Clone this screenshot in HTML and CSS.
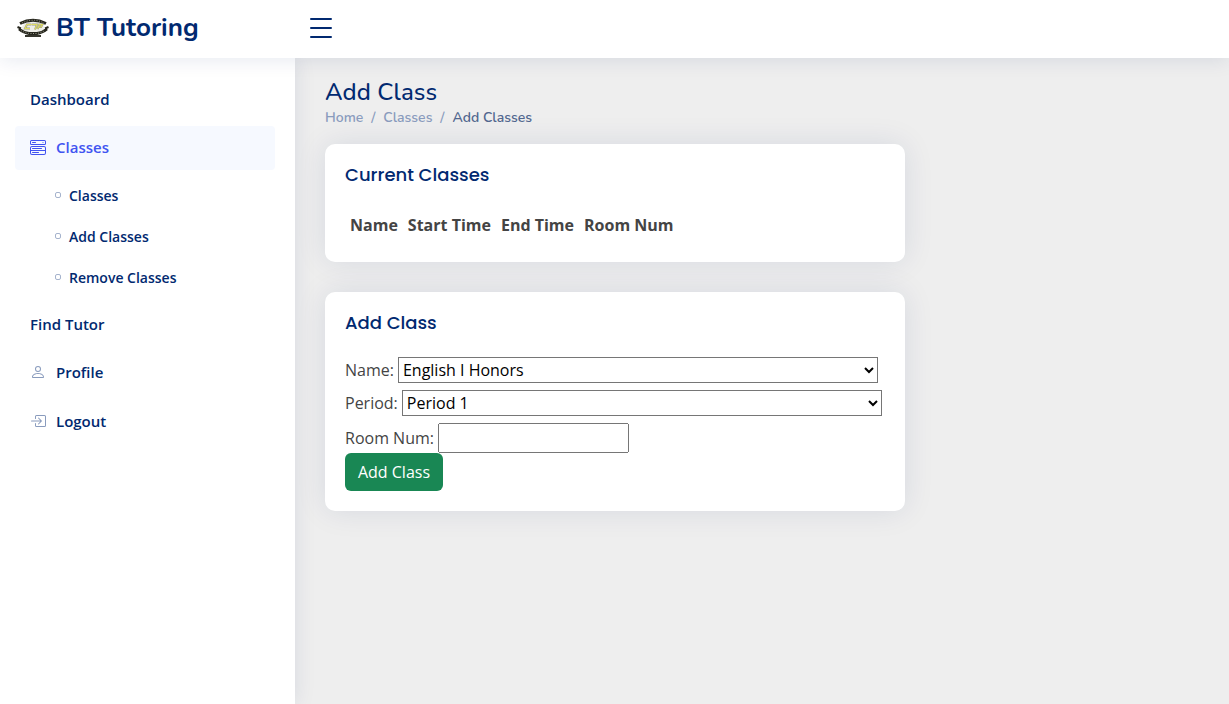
FILE: index.html
```html
<!DOCTYPE html>
<html lang="en">
<head>
<meta charset="utf-8">
<title>BT Tutoring - Add Class</title>
<link rel="stylesheet" href="styles.css">
</head>
<body>
<header class="header">
  <a class="logo">
    <svg class="logo-mark" viewBox="0 0 32 20" width="32" height="20">
      <ellipse cx="16" cy="9.500" rx="11" ry="6" fill="#eeeee8"/>
      <path d="M3 5.500Q16-1 29 5.500" fill="none" stroke="#25251c" stroke-width="2.800"/>
      <path d="M5 5Q16-.5 27 5" fill="none" stroke="#b8b8a8" stroke-width=".8" stroke-dasharray="1 1.500"/>
      <path d="M.5 9L4 10.500M31.500 9L28 10.500" stroke="#25251c" stroke-width="2"/>
      <path d="M2 11Q7 15 12 15.500H20Q25 15 30 11" fill="none" stroke="#25251c" stroke-width="2.800"/>
      <path d="M4 12.500Q8 15 13 15.500H19Q24 15 28 12.500" fill="none" stroke="#c0c0b0" stroke-width=".8" stroke-dasharray="1 1.500"/>
      <path d="M8 18H24" stroke="#35352c" stroke-width="2"/>
      <path d="M14 6.500H10L8 10.500H13M14.500 6.500H20L18 11.500M20.500 11L22.500 6.500H25.500L24 9H22" fill="none" stroke="#9a9a8a" stroke-width="2"/>
      <path d="M14 6.500H10L8 10.500H13M14.500 6.500H20L18 11.500M20.500 11L22.500 6.500H25.500L24 9H22" fill="none" stroke="#dfdc62" stroke-width="1.100"/>
    </svg>
    <span class="logo-text">BT Tutoring</span>
  </a>
  <svg class="menu-toggle" viewBox="0 0 32 32" width="32" height="32"><path d="M6 7H26M6 16H26M6 25H26" stroke="#012970" stroke-width="2" stroke-linecap="round"/></svg>
</header>
<div class="page">
  <aside class="sidebar">
    <a class="nav-link">Dashboard</a>
    <a class="nav-link active">
      <svg class="nav-icon" viewBox="0 0 16 16"><path d="M0 1.500A1.500 1.500 0 0 1 1.500 0h13A1.500 1.500 0 0 1 16 1.500v2A1.500 1.500 0 0 1 14.500 5h-13A1.500 1.500 0 0 1 0 3.500zM1.500 1a.5.5 0 0 0-.5.5v2a.5.5 0 0 0 .5.5h13a.5.5 0 0 0 .5-.5v-2a.5.5 0 0 0-.5-.5z"/><path d="M2 2.500a.5.5 0 0 1 .5-.5h3a.5.5 0 0 1 0 1h-3a.5.5 0 0 1-.5-.5m10.823.323-.396-.396A.25.25 0 0 1 12.604 2h.792a.25.25 0 0 1 .177.427l-.396.396a.25.25 0 0 1-.354 0M0 8a2 2 0 0 1 2-2h12a2 2 0 0 1 2 2v5a2 2 0 0 1-2 2H2a2 2 0 0 1-2-2zm1 3v2a1 1 0 0 0 1 1h12a1 1 0 0 0 1-1v-2zm14-1V8a1 1 0 0 0-1-1H2a1 1 0 0 0-1 1v2zM2 8.500a.5.5 0 0 1 .5-.5h9a.5.5 0 0 1 0 1h-9a.5.5 0 0 1-.5-.5m0 4a.5.5 0 0 1 .5-.5h6a.5.5 0 0 1 0 1h-6a.5.5 0 0 1-.5-.5"/></svg>
      <span class="nav-label">Classes</span>
    </a>
    <div class="subnav">
      <a class="sub-link"><i class="ring"></i><span class="sub-label">Classes</span></a>
      <a class="sub-link"><i class="ring"></i><span class="sub-label">Add Classes</span></a>
      <a class="sub-link"><i class="ring"></i><span class="sub-label">Remove Classes</span></a>
    </div>
    <a class="nav-link">Find Tutor</a>
    <a class="nav-link">
      <svg class="nav-icon" viewBox="0 0 16 16"><path d="M8 8a3 3 0 1 0 0-6 3 3 0 0 0 0 6m2-3a2 2 0 1 1-4 0 2 2 0 0 1 4 0m4 8c0 1-1 1-1 1H3s-1 0-1-1 1-4 6-4 6 3 6 4m-1-.004c-.001-.246-.154-.986-.832-1.664C11.516 10.680 10.289 10 8 10s-3.516.68-4.168 1.332c-.678.678-.83 1.418-.832 1.664z"/></svg>
      Profile
    </a>
    <a class="nav-link">
      <svg class="nav-icon" viewBox="0 0 16 16"><path fill-rule="evenodd" d="M6 3.500a.5.5 0 0 1 .5-.5h8a.5.5 0 0 1 .5.5v9a.5.5 0 0 1-.5.5h-8a.5.5 0 0 1-.5-.5v-2a.5.5 0 0 0-1 0v2A1.500 1.500 0 0 0 6.500 14h8a1.500 1.500 0 0 0 1.500-1.500v-9A1.500 1.500 0 0 0 14.500 2h-8A1.500 1.500 0 0 0 5 3.500v2a.5.5 0 0 0 1 0z"/><path fill-rule="evenodd" d="M11.854 8.354a.5.5 0 0 0 0-.708l-3-3a.5.5 0 1 0-.708.708L10.293 7.500H1.500a.5.5 0 0 0 0 1h8.793l-2.147 2.146a.5.5 0 0 0 .708.708z"/></svg>
      Logout
    </a>
  </aside>
  <main class="main">
    <h1 class="title">Add Class</h1>
    <nav class="crumbs"><a>Home</a><span class="sep">/</span><a>Classes</a><span class="sep">/</span><span class="current">Add Classes</span></nav>
    <section class="card current-card">
      <h5 class="card-title">Current Classes</h5>
      <table class="classes"><tr><th>Name</th><th>Start Time</th><th>End Time</th><th>Room Num</th></tr></table>
    </section>
    <section class="card add-card">
      <h5 class="card-title">Add Class</h5>
      <form class="form">
        <div class="row"><label>Name:</label><select><option>English I Honors</option></select></div>
        <div class="row"><label>Period:</label><select><option>Period 1</option></select></div>
        <div class="row room"><label>Room Num:</label><input type="text"></div>
        <button class="submit" type="button">Add Class</button>
      </form>
    </section>
  </main>
</div>
</body>
</html>
```
FILE: styles.css
```css
* { box-sizing: border-box; }
body {
  margin: 0;
  height: 704px;
  overflow: hidden;
  display: flex;
  flex-direction: column;
  background: #eee;
  color: #444;
  font: 16px/24px "Open Sans", sans-serif;
}
.header {
  position: relative;
  z-index: 2;
  height: 58px;
  flex: none;
  display: flex;
  align-items: center;
  padding: 0 0 2px 17px;
  background: #fff;
  box-shadow: 0 2px 20px rgba(1, 41, 112, .1);
}
.logo { display: flex; align-items: center; width: 288px; }
.logo-mark { margin-right: 7px; }
.logo-text {
  font: 700 26px/30px Nunito, Lato, sans-serif;
  color: #012970;
  white-space: nowrap;
}
.page { display: flex; flex: 1; min-height: 0; }
.sidebar {
  width: 295px;
  flex: none;
  padding: 19.5px 20px 0 15px;
  background: #fff;
  box-shadow: 0 0 20px rgba(1, 41, 112, .1);
}
.nav-link {
  display: flex;
  align-items: center;
  height: 43.5px;
  margin-bottom: 5px;
  padding: 0 15px;
  border-radius: 4px;
  font-size: 15px;
  font-weight: 600;
  color: #012970;
}
.nav-link.active { background: #f6f9ff; color: #4154f1; }
.nav-label { padding-bottom: 2px; }
.nav-icon { width: 16px; height: 16px; margin-right: 10px; fill: #899bbd; }
.active .nav-icon { fill: #4154f1; }
.subnav { padding-bottom: 4.5px; }
.sub-link {
  display: flex;
  align-items: center;
  height: 41px;
  padding-left: 40px;
  font-size: 14px;
  font-weight: 600;
  color: #012970;
}
.sub-label { padding-top: 2px; }
.ring { width: 6px; height: 6px; margin-right: 8px; border: 1px solid #a5b3cd; border-radius: 2px; }
.main { padding: 20px 30px; }
.title {
  margin: 0;
  font: 500 24px/29px Nunito, Lato, sans-serif;
  letter-spacing: .1px;
  color: #012970;
}
.crumbs {
  display: flex;
  height: 20px;
  margin-bottom: 17px;
  font: 600 14px/21px Nunito, Lato, sans-serif;
  color: #899bbd;
}
.sep { width: 20px; text-align: center; }
.current { color: #51678f; }
.card {
  width: 580px;
  margin-bottom: 30px;
  padding: 20px;
  border-radius: 10px;
  background: #fff;
  box-shadow: 0 0 30px rgba(1, 41, 112, .1);
}
.current-card { height: 118px; }
.add-card { height: 219px; }
.card-title {
  margin: 0;
  font: 500 18px/22px Poppins, Lato, sans-serif;
  color: #012970;
}
.classes { margin-top: 22px; border-collapse: collapse; }
.classes th { padding: 5px; line-height: 24px; }
.form { padding-top: 23px; }
.row { display: flex; align-items: center; gap: 4px; height: 26px; margin-bottom: 7px; }
.row select { width: 480px; height: 26px; font: inherit; background: #fff; }
.row.room { height: 30px; margin: 0; }
.row input { width: 191px; height: 30px; font: inherit; }
.submit {
  display: block;
  width: 98px;
  height: 38px;
  padding: 0;
  border: 0;
  border-radius: 6px;
  background: #198754;
  color: #fff;
  font: inherit;
}
```
